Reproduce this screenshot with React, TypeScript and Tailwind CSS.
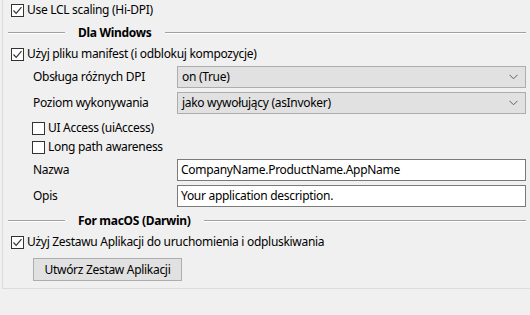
import React from "react"

function Check({ checked }: { checked?: boolean }) {
  return (
    <span className="flex h-[13px] w-[13px] shrink-0 items-center justify-center border border-[#333333] bg-white">
      {checked && (
        <svg width="11" height="11" viewBox="0 0 11 11">
          <path d="M1.5 5.5 L4.2 8.3 L9.5 2.2" fill="none" stroke="#333333" strokeWidth="1.2" />
        </svg>
      )}
    </span>
  )
}

function CheckRow({ label, checked, indent, className }: { label: string; checked?: boolean; indent?: boolean; className: string }) {
  return (
    <div className={`flex items-center gap-[3px] ${indent ? "pl-[29px]" : "pl-[8px]"} ${className}`}>
      <Check checked={checked} />
      <span>{label}</span>
    </div>
  )
}

function Separator({ title, className }: { title: string; className: string }) {
  return (
    <div className={`flex items-center pl-[5px] pr-[4px] ${className}`}>
      <div className="h-[2px] w-[57px] border-t border-b border-t-[#a0a0a0] border-b-white" />
      <span className="px-[13px] font-bold">{title}</span>
      <div className="h-[2px] flex-1 border-t border-b border-t-[#a0a0a0] border-b-white" />
    </div>
  )
}

function Chevron() {
  return (
    <svg width="9" height="6" viewBox="0 0 9 6" className="shrink-0">
      <path d="M0.5 0.8 L4.5 4.8 L8.5 0.8" fill="none" stroke="#606060" strokeWidth="1" />
    </svg>
  )
}

function SelectRow({ label, value, className }: { label: string; value: string; className: string }) {
  return (
    <div className={`flex items-center pl-[30px] pr-[4px] ${className}`}>
      <span className="w-[144px] shrink-0">{label}</span>
      <div className="flex h-[22px] flex-1 items-center justify-between border border-[#adadad] bg-[#e1e1e1] pl-[4px] pr-[7px]">
        <span>{value}</span>
        <Chevron />
      </div>
    </div>
  )
}

function InputRow({ label, value, className }: { label: string; value: string; className: string }) {
  return (
    <div className={`flex items-center pl-[30px] pr-[4px] ${className}`}>
      <span className="w-[144px] shrink-0">{label}</span>
      <div className="flex h-[22px] flex-1 items-center border border-[#7a7a7a] bg-white pl-[3px]">
        <span>{value}</span>
      </div>
    </div>
  )
}

export default function App() {
  return (
    <div
      className="h-[315px] w-[530px] overflow-hidden bg-[#f0f0f0] text-[12px] leading-[16px] tracking-[-0.3px] text-black"
      style={{ fontFamily: '"Noto Sans", "Open Sans", sans-serif' }}
    >
      <div className="ml-[2px] flex h-[289px] flex-col border-b border-l border-[#dcdcdc]">
        <CheckRow label="Use LCL scaling (Hi-DPI)" checked className="h-[20px]" />
        <Separator title="Dla Windows" className="mt-[3px] h-[20px]" />
        <CheckRow label="Użyj pliku manifest (i odblokuj kompozycje)" checked className="mt-[1px] h-[20px]" />
        <SelectRow label="Obsługa różnych DPI" value="on (True)" className="mt-[2px] h-[22px]" />
        <SelectRow label="Poziom wykonywania" value="jako wywołujący (asInvoker)" className="mt-[4px] h-[22px]" />
        <CheckRow label="UI Access (uiAccess)" indent className="mt-[5px] h-[18px]" />
        <CheckRow label="Long path awareness" indent className="mt-[1px] h-[18px]" />
        <InputRow label="Nazwa" value="CompanyName.ProductName.AppName" className="mt-[3px] h-[22px]" />
        <InputRow label="Opis" value="Your application description." className="mt-[4px] h-[22px]" />
        <Separator title="For macOS (Darwin)" className="mt-[4px] h-[20px]" />
        <CheckRow label="Użyj Zestawu Aplikacji do uruchomienia i odpluskiwania" checked className="mt-[1px] h-[20px]" />
        <div className="mt-[6px] pl-[30px]">
          <button className="flex h-[23px] w-[149px] items-center justify-center border border-[#adadad] bg-[#e1e1e1]">
            Utwórz Zestaw Aplikacji
          </button>
        </div>
      </div>
    </div>
  )
}
